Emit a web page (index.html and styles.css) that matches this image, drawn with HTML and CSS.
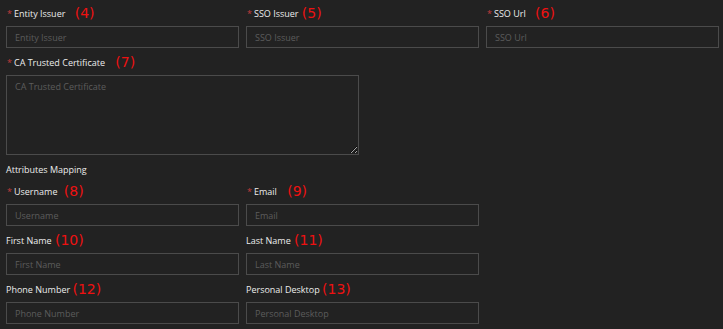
FILE: index.html
```html
<!DOCTYPE html>
<html lang="en">
<head>
    <meta charset="UTF-8">
    <meta name="viewport" content="width=device-width, initial-scale=1.0">
    <title>SAML Settings</title>
    <link rel="stylesheet" href="styles.css">
</head>
<body>

<form class="form">
    <div class="grid">
        <div class="field">
            <label class="label required">Entity Issuer <span class="note gap-l">(4)</span></label>
            <input class="input" type="text" placeholder="Entity Issuer">
        </div>
        <div class="field">
            <label class="label required">SSO Issuer <span class="note gap-s">(5)</span></label>
            <input class="input" type="text" placeholder="SSO Issuer">
        </div>
        <div class="field">
            <label class="label required">SSO Url <span class="note gap-l">(6)</span></label>
            <input class="input" type="text" placeholder="SSO Url">
        </div>

        <div class="field wide">
            <label class="label required">CA Trusted Certificate <span class="note gap-xl">(7)</span></label>
            <textarea class="input area" placeholder="CA Trusted Certificate"></textarea>
        </div>

        <div class="section wide">Attributes Mapping</div>

        <div class="field">
            <label class="label required">Username <span class="note gap-m">(8)</span></label>
            <input class="input" type="text" placeholder="Username">
        </div>
        <div class="field">
            <label class="label required">Email <span class="note gap-xl">(9)</span></label>
            <input class="input" type="text" placeholder="Email">
        </div>
        <div class="field empty"></div>

        <div class="field">
            <label class="label">First Name <span class="note gap-s">(10)</span></label>
            <input class="input" type="text" placeholder="First Name">
        </div>
        <div class="field">
            <label class="label">Last Name <span class="note gap-s">(11)</span></label>
            <input class="input" type="text" placeholder="Last Name">
        </div>
        <div class="field empty"></div>

        <div class="field">
            <label class="label">Phone Number <span class="note">(12)</span></label>
            <input class="input" type="text" placeholder="Phone Number">
        </div>
        <div class="field">
            <label class="label">Personal Desktop <span class="note">(13)</span></label>
            <input class="input" type="text" placeholder="Personal Desktop">
        </div>
    </div>
</form>

</body>
</html>
```

FILE: styles.css
```css
body {
    margin: 0;
    background-color: #222222;
    color: #e6e6e6;
    font-family: 'Open Sans', 'Noto Sans', sans-serif;
    font-size: 9px;
}
.form {
    padding: 6px 4px 0 6px;
}
.grid {
    display: grid;
    grid-template-columns: repeat(3, 1fr);
    column-gap: 7px;
}
.field {
    display: flex;
    flex-direction: column;
    margin-bottom: 7px;
}
.wide {
    grid-column: 1 / -1;
}
.label {
    display: block;
    height: 16px;
    line-height: 16px;
    margin-bottom: 4px;
    color: #ececec;
    white-space: nowrap;
}
.required::before {
    content: "*";
    color: #c23a3a;
    font-size: 9px;
    margin: 0 2px 0 1px;
}
.note {
    color: #ee1111;
    font-family: 'DejaVu Sans', sans-serif;
    font-size: 14px;
    line-height: 1;
    vertical-align: -1px;
}
.gap-s { margin-left: 1px; }
.gap-m { margin-left: 4px; }
.gap-l { margin-left: 7px; }
.gap-xl { margin-left: 8px; }
.input {
    box-sizing: border-box;
    height: 22px;
    width: 100%;
    padding: 0 8px;
    background-color: #222222;
    border: 1px solid #4b4b4b;
    border-radius: 0;
    color: #dcdcdc;
    font-family: inherit;
    font-size: 9px;
    outline: none;
}
.input::placeholder {
    color: #5c5c5c;
}
.area {
    width: 353px;
    height: 80px;
    padding: 4px 8px;
    resize: both;
    color-scheme: dark;
}
.section {
    height: 16px;
    line-height: 16px;
    margin: 0 0 6px;
    color: #ececec;
}
```
